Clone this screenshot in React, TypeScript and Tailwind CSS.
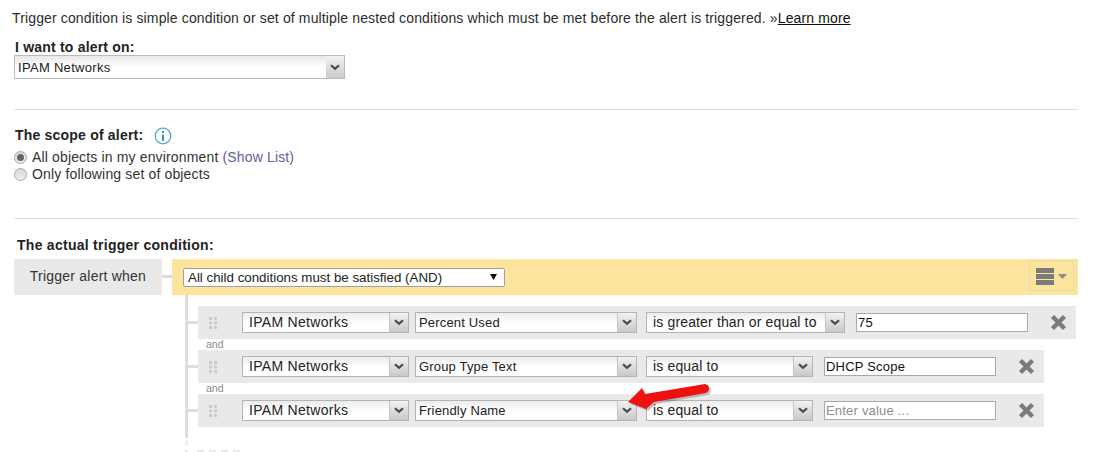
import React from "react";

const Chevron = () => (
  <svg width="10" height="7" viewBox="0 0 10 7"><path d="M1 1.2 L5 4.8 L9 1.2" fill="none" stroke="#4a4a4a" strokeWidth="2.2" /></svg>
);

function Sel({ label, className, textClass }: { label: string; className: string; textClass: string }) {
  return (
    <div className={`flex h-[21px] shrink-0 bg-gradient-to-b from-[#ececec] via-white to-white border border-[#b4b4b4] text-[#222] ${className}`}>
      <div className={`flex-1 truncate ${textClass}`}>{label}</div>
      <div className="w-[19px] flex items-center justify-center bg-gradient-to-b from-[#f2f2f2] to-[#c9c9c9] border-l border-[#c4c4c4]"><Chevron /></div>
    </div>
  );
}

const Grip = () => (
  <svg width="8" height="12" viewBox="0 0 8 12" className="ml-[11px] mr-[25px] shrink-0" fill="#cbcbcb">
    {[0, 4.5, 9].map((y) => (
      <g key={y}><rect x="0" y={y} width="3" height="3" /><rect x="5" y={y} width="3" height="3" /></g>
    ))}
  </svg>
);

const Cross = ({ className }: { className: string }) => (
  <svg width="17" height="17" viewBox="0 0 17 17" className={`shrink-0 ${className}`}><path d="M2.5 2.5 L14.5 14.5 M14.5 2.5 L2.5 14.5" stroke="#7b7b7b" strokeWidth="4.4" /></svg>
);

function Row({ field, op, value, placeholder, wide }: { field: string; op: string; value?: string; placeholder?: string; wide: boolean }) {
  return (
    <div className={`flex items-center h-[33px] bg-[#e9e9e9] ${wide ? "w-[878px]" : "w-[846px]"}`}>
      <Grip />
      <Sel label="IPAM Networks" className="w-[167px] mr-[6px]" textClass="pl-[6px] text-[14px] leading-[18px] tracking-[0.3px]" />
      <Sel label={field} className="w-[222px] mr-[9px]" textClass="pl-[3px] text-[13px] leading-[19px] tracking-[0.17px]" />
      <Sel label={op} className={wide ? "w-[199px] mr-[11px]" : "w-[167px] mr-[11px]"} textClass="pl-[6px] text-[14px] leading-[18px] tracking-[0.15px]" />
      <div className={`h-[19px] w-[172px] shrink-0 bg-white border border-[#a9a9a9] pl-[1px] text-[13px] tracking-[0.2px] leading-[17px] ${value ? "text-[#111]" : "text-[#8d8d8d]"}`}>
        {value ?? placeholder}
      </div>
      <Cross className="ml-[22px]" />
    </div>
  );
}

const Stub = () => <div className="w-[10px] h-[3px] bg-[#dcdcdc] shrink-0" />;

const Radio = ({ on }: { on?: boolean }) => (
  <span className="w-[13px] h-[13px] rounded-full border border-[#a8a8a8] bg-gradient-to-b from-[#d8d8d8] to-[#f0f0f0] flex items-center justify-center shrink-0">
    {on && <span className="w-[7px] h-[7px] rounded-full bg-[#666]" />}
  </span>
);

export default function App() {
  return (
    <div className="relative w-[1111px] h-[452px] overflow-hidden bg-white text-[#333]" style={{ fontFamily: '"Liberation Sans", Arial, sans-serif' }}>
      <div className="pl-[14px] pr-[33px] pt-[10px]">
        <p className="-ml-[2px] leading-[16px] text-[14px] text-[#2b2b2b] tracking-[0.135px]">
          Trigger condition is simple condition or set of multiple nested conditions which must be met before the alert is triggered. »<span className="underline text-[#111]">Learn more</span>
        </p>
        <div className="mt-[13px] ml-[1px] font-bold text-[14px] leading-[16px] tracking-[0.2px] text-[#222]">I want to alert on:</div>
        <div className="flex w-[331px] h-[24px] bg-gradient-to-b from-[#e8e8e8] via-white to-white border border-[#bbb] text-[13px] tracking-[0.3px] leading-[23px] text-[#222]">
          <div className="flex-1 pl-[3px]">IPAM Networks</div>
          <div className="w-[18px] flex items-center justify-center bg-gradient-to-b from-[#f2f2f2] to-[#c9c9c9]"><Chevron /></div>
        </div>
        <div className="mt-[30px] h-px bg-[#dedede]" />
        <div className="mt-[17px] ml-[1px] flex items-center gap-[11px] font-bold text-[14px] leading-[18px] tracking-[0.2px] text-[#222]">
          <span className="-mt-[2px]">The scope of alert:</span>
          <svg width="18" height="18" viewBox="0 0 18 18">
            <circle cx="9" cy="9" r="7.8" fill="none" stroke="#5aa5d0" strokeWidth="1.3" />
            <rect x="8" y="4" width="2" height="2" fill="#3f8fc0" />
            <rect x="8" y="7.5" width="2" height="6.5" fill="#3f8fc0" />
          </svg>
        </div>
        <div className="mt-[4px] flex items-center gap-[5px] leading-[17px] text-[14px] tracking-[0.15px] text-[#333]">
          <Radio on />
          <span>All objects in my environment <span className="text-[#5f6196]">(Show List)</span></span>
        </div>
        <div className="flex items-center gap-[5px] leading-[17px] text-[14px] tracking-[0.15px] text-[#333]">
          <Radio />
          <span>Only following set of objects</span>
        </div>
        <div className="mt-[35px] h-px bg-[#dedede]" />
        <div className="mt-[18px] ml-[3px] font-bold text-[14px] leading-[16px] tracking-[0.27px] text-[#222]">The actual trigger condition:</div>
        <div className="mt-[6px] flex items-start">
          <div className="w-[148px] h-[36px] bg-[#e9e9e9] text-center text-[14px] tracking-[0.22px] leading-[34px] text-[#333] shrink-0">Trigger alert when</div>
          <div className="w-[10px] h-[3px] mt-[16px] bg-[#dcdcdc] shrink-0" />
          <div className="flex-1">
            <div className="flex items-center justify-between h-[36px] bg-[#fde49c] pl-[11px] pr-[4px]">
              <div className="relative w-[322px] h-[19px] bg-white border border-[#a0a0a0] rounded-[2px] pl-[4px] text-[13.33px] leading-[18px] text-[#222]">
                All child conditions must be satisfied (AND)
                <svg width="7" height="6" viewBox="0 0 7 6" className="absolute right-[7px] top-[5px]"><path d="M0 0 H7 L3.5 6 Z" fill="#111" /></svg>
              </div>
              <div className="mb-[2px] w-[45px] h-[30px] border border-[#e6dcae] flex items-center justify-center gap-[4px]">
                <div className="flex flex-col gap-[1px]">
                  <div className="w-[18px] h-[5px] bg-[#7b7b7b]" />
                  <div className="w-[18px] h-[5px] bg-[#7b7b7b]" />
                  <div className="w-[18px] h-[5px] bg-[#7b7b7b]" />
                </div>
                <svg width="9" height="5" viewBox="0 0 9 5"><path d="M0 0 H9 L4.5 5 Z" fill="#8a8a8a" /></svg>
              </div>
            </div>
            <div className="ml-[13px] flex">
              <div className="w-[3px] flex flex-col shrink-0">
                <div className="h-[143px] bg-[#dcdcdc]" />
                <div className="mt-[2px] h-[6px] bg-[#efefef]" />
                <div className="mt-[4px] h-[2px] bg-[#e8e8e8]" />
              </div>
              <div className="pt-[11px]">
                <div className="flex items-center"><Stub /><Row wide field="Percent Used" op="is greater than or equal to" value="75" /></div>
                <div className="ml-[18px] h-[11px] text-[10.5px] leading-[10px] text-[#888]">and</div>
                <div className="flex items-center"><Stub /><Row wide={false} field="Group Type Text" op="is equal to" value="DHCP Scope" /></div>
                <div className="ml-[18px] h-[11px] text-[10.5px] leading-[10px] text-[#888]">and</div>
                <div className="flex items-center"><Stub /><Row wide={false} field="Friendly Name" op="is equal to" placeholder="Enter value ..." /></div>
                <div className="mt-[23px] ml-[9px] flex gap-[5px]">
                  {[0, 1, 2, 3].map((i) => <div key={i} className="w-[7px] h-[2px] bg-[#e8e8e8]" />)}
                </div>
              </div>
            </div>
          </div>
        </div>
      </div>
      <svg className="absolute left-[620px] top-[375px]" width="95" height="45" viewBox="0 0 95 45">
        <path d="M8 27 L22 13 L25 19 L85 9 Q89 10 89 13 Q89 17 86 18 L34 27 L26 34 Z" fill="#444" opacity="0.3" transform="translate(2 2)" />
        <path d="M8 27 L22 13 L25 19 L85 9 Q89 10 89 13 Q89 17 86 18 L34 27 L26 34 Z" fill="#ee1111" />
      </svg>
    </div>
  );
}
